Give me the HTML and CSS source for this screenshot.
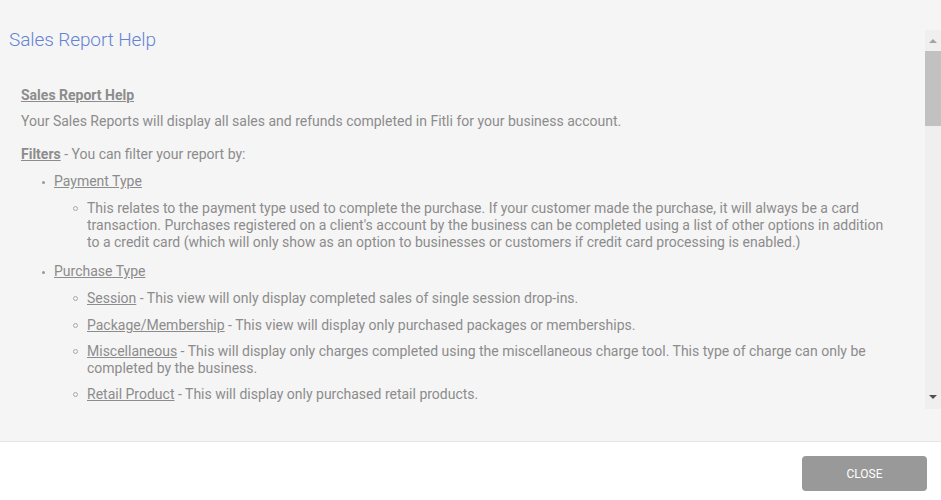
FILE: index.html
```html
<!DOCTYPE html>
<html lang="en">
<head>
    <meta charset="UTF-8">
    <meta name="viewport" content="width=device-width, initial-scale=1.0">
    <title>Sales Report Help</title>

    <link rel="stylesheet" href="styles.css">
</head>
<body>
    <div class="modal">
        <div class="modal-main">
            <div class="modal-body">
                <h2 class="modal-title">Sales Report Help</h2>
                <p class="help-heading"><u>Sales Report Help</u></p>
                <p class="intro">Your Sales Reports will display all sales and refunds completed in Fitli for your business account.</p>
                <p class="filters"><u class="strong">Filters</u> - You can filter your report by:</p>
                <ul class="list">
                    <li>
                        <div class="item">
                            <u>Payment Type</u>
                            <ul class="sublist">
                                <li><div class="item">This relates to the payment type used to complete the purchase. If your customer made the purchase, it will always be a card transaction. Purchases registered on a client's account by the business can be completed using a list of other options in addition to a credit card (which will only show as an option to businesses or customers if credit card processing is enabled.)</div></li>
                            </ul>
                        </div>
                    </li>
                    <li>
                        <div class="item">
                            <u>Purchase Type</u>
                            <ul class="sublist">
                                <li><div class="item"><u>Session</u> - This view will only display completed sales of single session drop-ins.</div></li>
                                <li><div class="item"><u>Package/Membership</u> - This view will display only purchased packages or memberships.</div></li>
                                <li><div class="item"><u>Miscellaneous</u> - This will display only charges completed using the miscellaneous charge tool. This type of charge can only be completed by the business.</div></li>
                                <li><div class="item"><u>Retail Product</u> - This will display only purchased retail products.</div></li>
                            </ul>
                        </div>
                    </li>
                </ul>
            </div>
            <div class="scrollbar">
                <div class="arrow arrow-up"></div>
                <div class="thumb"></div>
                <div class="track"></div>
                <div class="arrow arrow-down"></div>
            </div>
        </div>
        <div class="modal-footer">
            <button class="close-button">CLOSE</button>
        </div>
    </div>
</body>
</html>
```

FILE: styles.css
```css
body {
    font-family: Roboto, "Open Sans", sans-serif;
    margin: 0;
    padding: 0;
    background-color: #fff;
}

.modal {
    width: 941px;
    height: 500px;
    display: flex;
    flex-direction: column;
}

.modal-main {
    height: 381px;
    padding: 28px 0 32px;
    background-color: #f5f5f5;
    border-bottom: 1px solid #e6e6e6;
    display: flex;
}

.modal-body {
    flex: 1;
    padding: 0 30px 0 21px;
    color: #8c8c8c;
    font-size: 14px;
    line-height: 17px;
    overflow: hidden;
}

.modal-title {
    font-size: 19px;
    font-weight: 300;
    line-height: 24px;
    letter-spacing: -0.1px;
    color: #6483d4;
    margin: 0 0 35px -12px;
}

p {
    margin: 0;
}

u {
    text-decoration: underline;
    text-underline-offset: 1px;
}

.help-heading {
    font-weight: 700;
    margin-bottom: 9px;
}

.intro {
    margin-bottom: 16px;
}

.strong {
    font-weight: 700;
}

.filters {
    margin-bottom: 10px;
}

.list, .sublist {
    list-style: none;
    margin: 0;
    padding: 0 0 0 21px;
}

.list > li + li {
    margin-top: 12px;
}

.list > li {
    display: flex;
}

.list > li::before {
    content: "";
    flex-shrink: 0;
    width: 3px;
    height: 3px;
    border-radius: 50%;
    background-color: #999;
    margin: 8px 9px 0 0;
}

.sublist {
    padding-left: 19px;
    margin-top: 10px;
}

.sublist > li {
    display: flex;
}

.sublist > li + li {
    margin-top: 9px;
}

.sublist > li:nth-child(2) {
    margin-top: 10px;
}

.sublist > li::before {
    content: "";
    flex-shrink: 0;
    width: 3px;
    height: 3px;
    border-radius: 50%;
    border: 1px solid #a8a8a8;
    margin: 6px 9px 0 0;
}

.item {
    flex: 1;
}

.scrollbar {
    width: 16px;
    margin-top: 2px;
    background-color: #efefef;
    display: flex;
    flex-direction: column;
    align-items: center;
}

.arrow {
    width: 0;
    height: 0;
    border-left: 4px solid transparent;
    border-right: 4px solid transparent;
}

.arrow-up {
    border-bottom: 4px solid #a3a3a3;
    margin: 9px 0 8px;
}

.arrow-down {
    border-top: 4px solid #505050;
    margin: 0 0 10px;
}

.thumb {
    width: 16px;
    height: 75px;
    background-color: #c1c1c1;
}

.track {
    flex: 1;
}

.modal-footer {
    flex: 1;
    display: flex;
    justify-content: flex-end;
    align-items: flex-start;
    padding: 14px 14px 0 0;
}

.close-button {
    width: 125px;
    height: 35px;
    background-color: #999;
    color: #fff;
    border: none;
    border-radius: 4px;
    font-family: Roboto, sans-serif;
    font-size: 12px;
    cursor: pointer;
}
```
